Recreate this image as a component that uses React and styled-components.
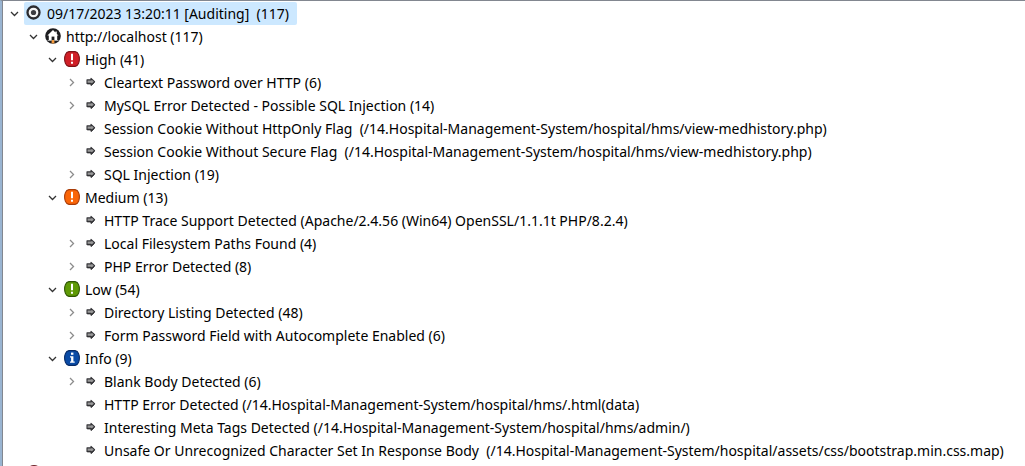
import React, { useState } from 'react';
import styled, { createGlobalStyle } from 'styled-components';

const GlobalStyle = createGlobalStyle`
  * { box-sizing: border-box; }
  html, body { margin: 0; background: #fff; }
`;

const Panel = styled.main`
  height: 100vh;
  overflow: hidden;
  border-top: 1px solid #828790;
  border-left: 2px solid #99b4d1;
  background: #fff;
  color: #000;
  font-family: 'Segoe UI', 'Noto Sans', 'Open Sans', sans-serif;
  font-size: 14px;
  line-height: 23px;
`;

const Inner = styled.div`
  border-left: 1px solid #828790;
  padding: 1px 0 0 4px;
`;

const Branch = styled.ul`
  list-style: none;
  margin: 0;
  padding: 0 0 0 ${(p) => (p.$nested ? '19px' : '0')};
`;

const Row = styled.div`
  display: flex;
  align-items: center;
  height: 23px;
  white-space: pre;
`;

const Toggle = styled.button`
  display: grid;
  place-items: center;
  flex: none;
  width: 15px;
  height: 23px;
  margin-right: 2px;
  padding: 0;
  border: 0;
  background: none;
  color: ${(p) => (p.$open ? '#333' : '#8c8c8c')};
`;

const ToggleSpace = styled.span`
  flex: none;
  width: 17px;
`;

const Label = styled.span`
  display: flex;
  align-items: center;
  gap: 5px;
  height: 23px;
  padding: 0 8px 0 2px;
  border-radius: 2px;
  background: ${(p) => (p.$selected ? '#cce8ff' : 'transparent')};
`;

const Glyph = styled.svg`
  display: block;
  flex: none;
`;

const NodeIcon = styled(Glyph).attrs({ width: 16, height: 16, viewBox: '0 0 16 16' })`
  margin-bottom: 1px;
`;

function Chevron({ open }) {
  return (
    <Glyph width="11" height="11" viewBox="0 0 11 11" fill="none" stroke="currentColor" strokeWidth="1.3">
      <path d={open ? 'M2 4 5.5 7.5 9 4' : 'M4 2 7.5 5.5 4 9'} />
    </Glyph>
  );
}

const severity = {
  high: ['#d01f27', '#7d1217'],
  medium: ['#fa6508', '#a83c08'],
  low: ['#5f9a06', '#2f5604'],
  info: ['#0a4ba6', '#062a66'],
};

function Icon({ kind }) {
  if (kind === 'scan') {
    return (
      <NodeIcon>
        <circle cx="7.5" cy="7.5" r="6" fill="#f4f4f4" stroke="#2b2b2f" strokeWidth="2.3" />
        <circle cx="7.5" cy="7.5" r="2.6" fill="#3c3c40" />
      </NodeIcon>
    );
  }
  if (kind === 'home') {
    return (
      <NodeIcon>
        <circle cx="8" cy="8" r="7.8" fill="#1d1d20" />
        <path d="M8 2 2.4 7.6h1.4v4.6h8.4V7.6h1.4L11.8 6V3.4h-1.4v1.2z" fill="#fff" />
        <path d="M6.6 8.6h2.8v3.4H6.6z" fill="#1d1d20" />
        <path d="M6.6 12h2.8v3.4H6.6z" fill="#f39a3c" />
        <path d="M2.6 12.5h4M9.4 12.5h4" stroke="#a8a8a8" strokeWidth="1" />
      </NodeIcon>
    );
  }
  if (kind === 'issue') {
    return (
      <NodeIcon>
        <path
          d="M4 5.9H8V4.4L11.6 7.7 8 11V9.4H4z"
          fill="#9a9a9a"
          stroke="#333337"
          strokeWidth="1.1"
          strokeLinejoin="round"
        />
        <path d="M4.2 9.9H8.4v1.6L11.6 8.4" fill="none" stroke="#333337" strokeWidth=".9" />
      </NodeIcon>
    );
  }
  if (kind === 'stopped') {
    return (
      <NodeIcon>
        <circle cx="8" cy="8" r="8" fill="#6d2329" />
      </NodeIcon>
    );
  }
  const [fill, edge] = severity[kind];
  return (
    <NodeIcon>
      <path
        d="M5 .6h6Q13.6 1 14.6 3.6 15.4 5.5 15.4 8T14.6 12.4Q13.6 15 11 15.4H5Q2.4 15 1.4 12.4.6 10.5.6 8T1.4 3.6Q2.4 1 5 .6z"
        fill={fill}
        stroke={edge}
        strokeWidth="1.1"
        strokeLinejoin="round"
      />
      {kind === 'info' ? (
        <>
          <path d="M7 2.6h2.4v2.2H7z" fill="#fff" />
          <path d="M6 6.2h3.4v5.2h1.3v1.4H6v-1.4h1.1V7.6H6z" fill="#fff" />
        </>
      ) : (
        <>
          <path d="M7 2.8h2v6.4H7z" fill="#fff" />
          <path d="M7 10.7h2v2H7z" fill="#fff" />
        </>
      )}
    </NodeIcon>
  );
}

const issue = (text, collapsed = false) => ({ icon: 'issue', text, collapsed });

const scans = [
  {
    icon: 'scan',
    text: '09/17/2023 13:20:11 [Auditing]  (117)',
    selected: true,
    children: [
      {
        icon: 'home',
        text: 'http://localhost (117)',
        children: [
          {
            icon: 'high',
            text: 'High (41)',
            children: [
              issue('Cleartext Password over HTTP (6)', true),
              issue('MySQL Error Detected - Possible SQL Injection (14)', true),
              issue('Session Cookie Without HttpOnly Flag  (/14.Hospital-Management-System/hospital/hms/view-medhistory.php)'),
              issue('Session Cookie Without Secure Flag  (/14.Hospital-Management-System/hospital/hms/view-medhistory.php)'),
              issue('SQL Injection (19)', true),
            ],
          },
          {
            icon: 'medium',
            text: 'Medium (13)',
            children: [
              issue('HTTP Trace Support Detected (Apache/2.4.56 (Win64) OpenSSL/1.1.1t PHP/8.2.4)'),
              issue('Local Filesystem Paths Found (4)', true),
              issue('PHP Error Detected (8)', true),
            ],
          },
          {
            icon: 'low',
            text: 'Low (54)',
            children: [
              issue('Directory Listing Detected (48)', true),
              issue('Form Password Field with Autocomplete Enabled (6)', true),
            ],
          },
          {
            icon: 'info',
            text: 'Info (9)',
            children: [
              issue('Blank Body Detected (6)', true),
              issue('HTTP Error Detected (/14.Hospital-Management-System/hospital/hms/.html(data)'),
              issue('Interesting Meta Tags Detected (/14.Hospital-Management-System/hospital/hms/admin/)'),
              issue('Unsafe Or Unrecognized Character Set In Response Body  (/14.Hospital-Management-System/hospital/assets/css/bootstrap.min.css.map)'),
            ],
          },
        ],
      },
    ],
  },
  { icon: 'stopped', text: '' },
];

function TreeNode({ node }) {
  const [open, setOpen] = useState(!node.collapsed);
  const expandable = node.collapsed || Boolean(node.children);
  return (
    <li role="treeitem" aria-expanded={expandable ? open : undefined} aria-selected={Boolean(node.selected)}>
      <Row>
        {expandable ? (
          <Toggle type="button" $open={open} aria-label={`Toggle ${node.text}`} onClick={() => setOpen(!open)}>
            <Chevron open={open} />
          </Toggle>
        ) : (
          <ToggleSpace />
        )}
        <Label $selected={node.selected}>
          <Icon kind={node.icon} />
          <span>{node.text}</span>
        </Label>
      </Row>
      {open && node.children && (
        <Branch $nested role="group">
          {node.children.map((child) => (
            <TreeNode key={child.text} node={child} />
          ))}
        </Branch>
      )}
    </li>
  );
}

export default function App() {
  return (
    <>
      <GlobalStyle />
      <Panel>
        <Inner>
          <Branch role="tree" aria-label="Scan results">
            {scans.map((scan) => (
              <TreeNode key={scan.icon} node={scan} />
            ))}
          </Branch>
        </Inner>
      </Panel>
    </>
  );
}
